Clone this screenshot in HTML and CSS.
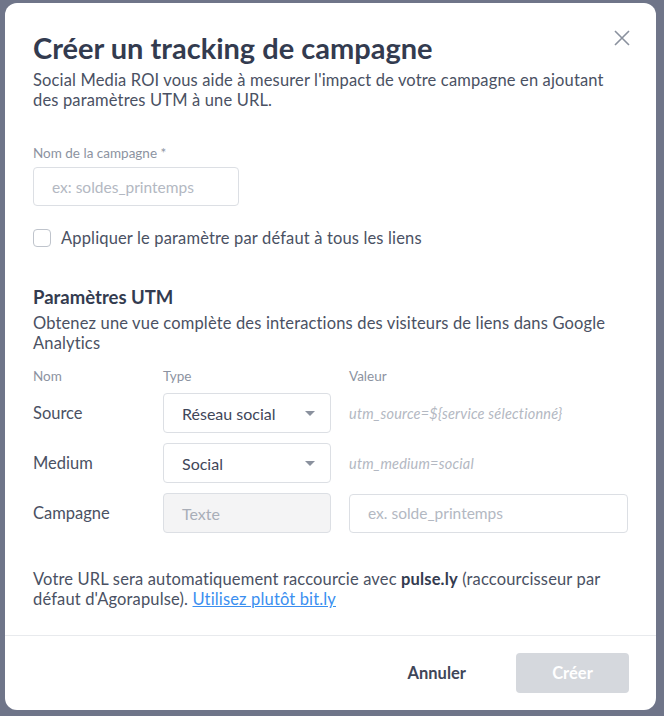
FILE: index.html
```html
<!DOCTYPE html>
<html lang="fr">
<head>
    <meta charset="UTF-8">
    <meta name="viewport" content="width=device-width, initial-scale=1.0">
    <title>Créer un tracking de campagne</title>
    <link rel="stylesheet" href="styles.css">
</head>
<body>
    <div class="modal">
        <div class="modal-body">
            <button class="close" aria-label="Fermer">
                <svg width="16" height="16" viewBox="0 0 16 16"><path d="M1 1L15 15M15 1L1 15" stroke="#8a919e" stroke-width="1.6" fill="none"/></svg>
            </button>
            <h1>Créer un tracking de campagne</h1>
            <p class="intro">Social Media ROI vous aide à mesurer l'impact de votre campagne en ajoutant des paramètres UTM à une URL.</p>

            <div class="field">
                <label for="name">Nom de la campagne *</label>
                <input type="text" id="name" class="input name-input" placeholder="ex: soldes_printemps">
            </div>

            <label class="check">
                <span class="box"></span>
                Appliquer le paramètre par défaut à tous les liens
            </label>

            <h2>Paramètres UTM</h2>
            <p class="intro">Obtenez une vue complète des interactions des visiteurs de liens dans Google Analytics</p>

            <div class="utm">
                <div class="utm-head">Nom</div>
                <div class="utm-head">Type</div>
                <div class="utm-head">Valeur</div>

                <div class="utm-name">Source</div>
                <div class="select">Réseau social <span class="caret"></span></div>
                <div class="utm-value">utm_source=${service sélectionné}</div>

                <div class="utm-name">Medium</div>
                <div class="select">Social <span class="caret"></span></div>
                <div class="utm-value">utm_medium=social</div>

                <div class="utm-name">Campagne</div>
                <div class="select disabled">Texte</div>
                <input type="text" class="input" placeholder="ex. solde_printemps">
            </div>

            <p class="note">Votre URL sera automatiquement raccourcie avec <strong>pulse.ly</strong> (raccourcisseur par défaut d'Agorapulse). <a href="#">Utilisez plutôt bit.ly</a></p>
        </div>
        <div class="modal-footer">
            <button class="btn-cancel">Annuler</button>
            <button class="btn-create" disabled>Créer</button>
        </div>
    </div>
</body>
</html>
```

FILE: styles.css
```css
body {
    margin: 0;
    height: 716px;
    overflow: hidden;
    background: #6f7589;
    font-family: Lato, 'Noto Sans', sans-serif;
    color: #3f4659;
}
.modal {
    position: relative;
    width: 651px;
    height: 707px;
    margin: 3px 0 0 5px;
    background: white;
    border-radius: 12px;
    display: flex;
    flex-direction: column;
}
.modal-body {
    flex: 1;
    padding: 29px 28px 0 28px;
}
.close {
    position: absolute;
    top: 27px;
    right: 26px;
    background: none;
    border: none;
    padding: 0;
    cursor: pointer;
}
h1 {
    margin: 0 0 6px;
    font-size: 29px;
    line-height: 32px;
    font-weight: 700;
    color: #333b4f;
}
h2 {
    margin: 37px 0 4px;
    font-size: 18.5px;
    line-height: 24px;
    font-weight: 700;
    color: #333b4f;
}
.intro {
    margin: 0;
    font-size: 16.5px;
    letter-spacing: 0.15px;
    line-height: 20px;
    color: #4a5163;
}
.field {
    margin-top: 35px;
}
.field label {
    display: block;
    font-size: 13.5px;
    color: #8c93a1;
    margin-bottom: 6px;
}
.input {
    box-sizing: border-box;
    height: 39px;
    border: 1px solid #dcdfe4;
    border-radius: 4px;
    padding: 0 18px;
    font-family: inherit;
    font-size: 15.5px;
    color: #3f4659;
}
.input::placeholder {
    color: #b3b8c2;
}
.name-input {
    width: 206px;
}
.check {
    display: flex;
    align-items: center;
    gap: 10px;
    margin-top: 22px;
    font-size: 16.5px;
    letter-spacing: 0.15px;
    color: #4a5163;
}
.box {
    width: 16px;
    height: 16px;
    border: 1px solid #bfc4cc;
    border-radius: 4px;
}
.utm {
    display: grid;
    grid-template-columns: 112px 168px 1fr;
    grid-template-rows: 14px;
    grid-auto-rows: 40px;
    column-gap: 18px;
    row-gap: 10px;
    align-items: center;
    margin-top: 16px;
}
.utm-head {
    font-size: 13.5px;
    line-height: 14px;
    color: #8c93a1;
}
.utm-name {
    font-size: 16.5px;
    color: #4a5163;
}
.utm-value {
    font-size: 14.5px;
    letter-spacing: 0.2px;
    font-style: italic;
    color: #b3b8c2;
}
.select {
    box-sizing: border-box;
    height: 40px;
    border: 1px solid #dcdfe4;
    border-radius: 4px;
    padding: 0 18px;
    display: flex;
    align-items: center;
    justify-content: space-between;
    font-size: 16px;
    color: #3f4659;
}
.select.disabled {
    background: #f4f4f5;
    color: #a9aeb8;
}
.caret {
    width: 0;
    height: 0;
    border-left: 5px solid transparent;
    border-right: 5px solid transparent;
    border-top: 5px solid #8a919e;
    margin-right: -3px;
}
.utm .input {
    width: 100%;
}
.note {
    margin: 36px 0 0;
    font-size: 16.5px;
    letter-spacing: 0.15px;
    line-height: 20px;
    color: #4a5163;
}
.note strong {
    color: #333b4f;
}
.note a {
    color: #3b8ff0;
}
.modal-footer {
    height: 74px;
    border-top: 1px solid #e8eaed;
    display: flex;
    align-items: center;
    justify-content: flex-end;
    padding: 0 27px;
    gap: 44px;
}
.btn-cancel {
    background: none;
    border: none;
    font-family: inherit;
    font-size: 16.5px;
    font-weight: 700;
    color: #3f4659;
    cursor: pointer;
}
.btn-create {
    width: 113px;
    height: 40px;
    border: none;
    border-radius: 4px;
    background: #d5d8dd;
    color: white;
    font-family: inherit;
    font-size: 16.5px;
    font-weight: 700;
}
```
